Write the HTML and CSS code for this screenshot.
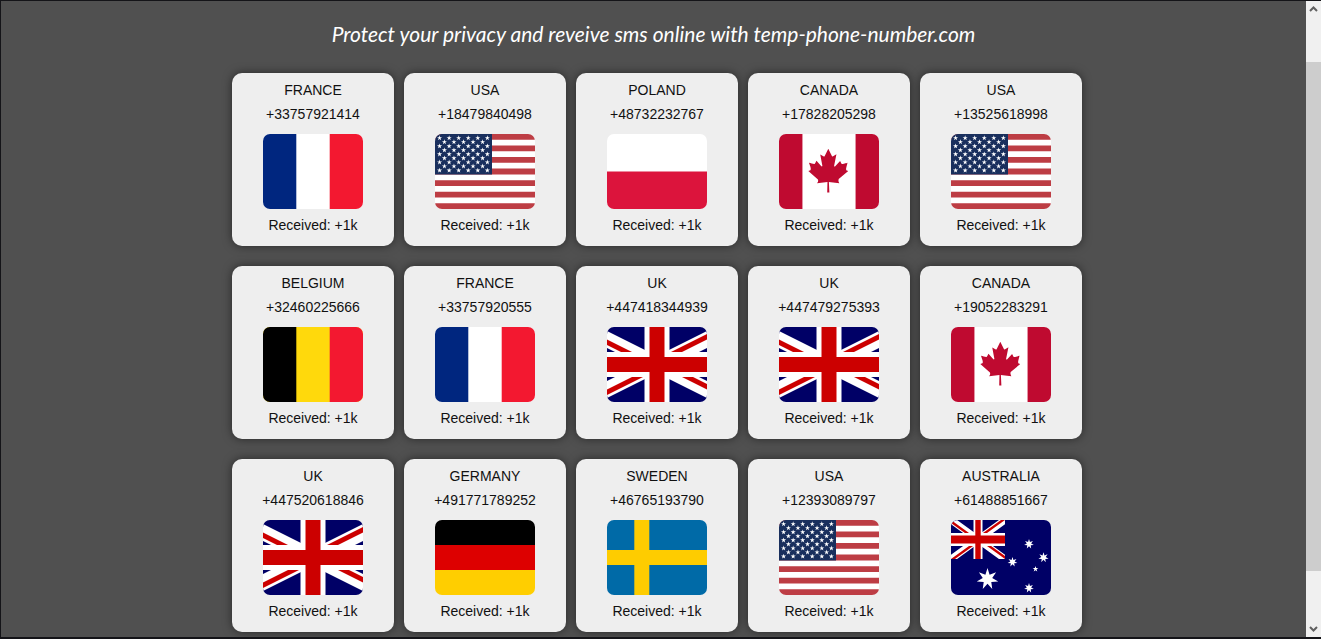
FILE: index.html
```html
<!DOCTYPE html>
<html lang="en">
<head>
<meta charset="utf-8">
<title>Temp phone number</title>
<link rel="stylesheet" href="styles.css">
</head>
<body>
<svg class="sprite" aria-hidden="true">
  <defs>
    <polygon id="star5" points="0,-10 2.2,-3.1 9.5,-3.1 3.6,1.2 5.9,8.1 0,3.8 -5.9,8.1 -3.6,1.2 -9.5,-3.1 -2.2,-3.1"/>
    <polygon id="star7" points="0,-10 1.91,-3.96 7.82,-6.23 4.29,-.98 9.75,2.23 3.44,2.74 4.34,9.01 0,4.4 -4.34,9.01 -3.44,2.74 -9.75,2.23 -4.29,-.98 -7.82,-6.23 -1.91,-3.96"/>
    <use id="us-star" href="#star5" transform="scale(.27)"/>
    <g id="us-row5"><use href="#us-star"/><use href="#us-star" x="9.55"/><use href="#us-star" x="19.1"/><use href="#us-star" x="28.65"/><use href="#us-star" x="38.2"/></g>
    <g id="us-row6"><use href="#us-row5"/><use href="#us-star" x="47.75"/></g>
    <clipPath id="jack-halves"><path d="M30 15h30v15zv15H0zH0V0zV0h30z"/></clipPath>
    <clipPath id="jack-frame"><path d="M0 0h60v30H0z"/></clipPath>
    <g id="jack" clip-path="url(#jack-frame)">
      <path fill="#006" d="M0 0h60v30H0z"/>
      <path stroke="#fff" stroke-width="6" d="M0 0l60 30M60 0L0 30"/>
      <path stroke="#c00" stroke-width="4" clip-path="url(#jack-halves)" d="M0 0l60 30M60 0L0 30"/>
      <path stroke="#fff" stroke-width="10" d="M30 0v30M0 15h60"/>
      <path stroke="#c00" stroke-width="6" d="M30 0v30M0 15h60"/>
    </g>
  </defs>
  <symbol id="fr" viewBox="0 0 100 75"><path fill="#fff" d="M0 0h100v75H0z"/><path fill="#00267f" d="M0 0h33.3v75H0z"/><path fill="#f31830" d="M66.7 0H100v75H66.7z"/></symbol>
  <symbol id="be" viewBox="0 0 100 75"><path fill="#ffd90c" d="M0 0h100v75H0z"/><path d="M0 0h33.3v75H0z"/><path fill="#f31830" d="M66.7 0H100v75H66.7z"/></symbol>
  <symbol id="pl" viewBox="0 0 100 75"><path fill="#fff" d="M0 0h100v75H0z"/><path fill="#dc143c" d="M0 37.5h100V75H0z"/></symbol>
  <symbol id="de" viewBox="0 0 100 75"><path d="M0 0h100v25H0z"/><path fill="#d00" d="M0 25h100v25H0z"/><path fill="#ffce00" d="M0 50h100v25H0z"/></symbol>
  <symbol id="se" viewBox="0 0 100 75"><path fill="#006aa7" d="M0 0h100v75H0z"/><path fill="#fecc00" d="M27.3 0h15v30H100v15H42.3v30h-15V45H0V30h27.3z"/></symbol>
  <symbol id="gb" viewBox="0 0 100 75"><use href="#jack" transform="translate(-25 0) scale(2.5)"/></symbol>
  <symbol id="ca" viewBox="0 0 640 480"><path fill="#fff" d="M0 0h640v480H0z"/><path fill="#bf0a30" d="M0 0h150v480H0zM490 0h150v480H490zM201 232l-13.3 4.4 61.4 54c4.7 13.7-1.6 17.8-5.6 25l66.6-8.4-1.6 67 13.9-.3-3.1-66.6 66.7 8c-4.1-8.7-7.8-13.3-4-27.2l61.3-51-10.7-4c-8.8-6.8 3.8-32.6 5.6-48.9 0 0-35.7 12.3-38 5.8l-9.2-17.5-32.6 35.8c-3.5.9-5-.5-5.9-3.5l15-74.8-23.8 13.4c-2 .9-4 .1-5.2-2.2l-23-46-23.6 47.8c-1.8 1.7-3.6 1.9-5 .7L264 130.8l13.7 74.1c-1.1 3-3.7 3.8-6.7 2.2l-31.2-35.3c-4 6.5-6.8 17.1-12.2 19.5-5.4 2.3-23.5-4.5-35.6-7 4.2 14.8 17 39.6 9 47.7z"/></symbol>
  <symbol id="us" viewBox="0 0 100 75">
    <path fill="#fff" d="M0 0h100v75H0z"/>
    <path stroke="#bd3d44" stroke-width="5.77" d="M0 2.88h100M0 14.42h100M0 25.96h100M0 37.5h100M0 49.04h100M0 60.58h100M0 72.12h100"/>
    <path fill="#192f5d" d="M0 0h57v40.4H0z"/>
    <g fill="#fff">
      <use href="#us-row6" x="4.6" y="4"/><use href="#us-row5" x="9.4" y="8"/><use href="#us-row6" x="4.6" y="12.1"/><use href="#us-row5" x="9.4" y="16.1"/><use href="#us-row6" x="4.6" y="20.2"/><use href="#us-row5" x="9.4" y="24.2"/><use href="#us-row6" x="4.6" y="28.3"/><use href="#us-row5" x="9.4" y="32.3"/><use href="#us-row6" x="4.6" y="36.4"/>
    </g>
  </symbol>
  <symbol id="au" viewBox="0 0 100 75">
    <path fill="#006" d="M0 0h100v75H0z"/>
    <use href="#jack" transform="scale(.9 1.3)"/>
    <g fill="#fff">
      <use href="#star7" transform="translate(36.5 59) scale(1.1)"/>
      <use href="#star7" transform="translate(78 24) scale(.5)"/>
      <use href="#star7" transform="translate(92.5 37.5) scale(.52)"/>
      <use href="#star7" transform="translate(61.5 42) scale(.5)"/>
      <use href="#star7" transform="translate(78 68) scale(.5)"/>
      <use href="#star5" transform="translate(84.5 49) scale(.3)"/>
    </g>
  </symbol>
</svg>
<div class="window">
  <main class="page">
    <h1 class="title">Protect your privacy and reveive sms online with temp-phone-number.com</h1>
    <div class="cards">
      <a class="card" href="#"><span>FRANCE</span><span>+33757921414</span><svg class="flag" aria-hidden="true"><use href="#fr"/></svg><span>Received: +1k</span></a>
      <a class="card" href="#"><span>USA</span><span>+18479840498</span><svg class="flag" aria-hidden="true"><use href="#us"/></svg><span>Received: +1k</span></a>
      <a class="card" href="#"><span>POLAND</span><span>+48732232767</span><svg class="flag" aria-hidden="true"><use href="#pl"/></svg><span>Received: +1k</span></a>
      <a class="card" href="#"><span>CANADA</span><span>+17828205298</span><svg class="flag" aria-hidden="true"><use href="#ca"/></svg><span>Received: +1k</span></a>
      <a class="card" href="#"><span>USA</span><span>+13525618998</span><svg class="flag" aria-hidden="true"><use href="#us"/></svg><span>Received: +1k</span></a>
      <a class="card" href="#"><span>BELGIUM</span><span>+32460225666</span><svg class="flag" aria-hidden="true"><use href="#be"/></svg><span>Received: +1k</span></a>
      <a class="card" href="#"><span>FRANCE</span><span>+33757920555</span><svg class="flag" aria-hidden="true"><use href="#fr"/></svg><span>Received: +1k</span></a>
      <a class="card" href="#"><span>UK</span><span>+447418344939</span><svg class="flag" aria-hidden="true"><use href="#gb"/></svg><span>Received: +1k</span></a>
      <a class="card" href="#"><span>UK</span><span>+447479275393</span><svg class="flag" aria-hidden="true"><use href="#gb"/></svg><span>Received: +1k</span></a>
      <a class="card" href="#"><span>CANADA</span><span>+19052283291</span><svg class="flag" aria-hidden="true"><use href="#ca"/></svg><span>Received: +1k</span></a>
      <a class="card" href="#"><span>UK</span><span>+447520618846</span><svg class="flag" aria-hidden="true"><use href="#gb"/></svg><span>Received: +1k</span></a>
      <a class="card" href="#"><span>GERMANY</span><span>+491771789252</span><svg class="flag" aria-hidden="true"><use href="#de"/></svg><span>Received: +1k</span></a>
      <a class="card" href="#"><span>SWEDEN</span><span>+46765193790</span><svg class="flag" aria-hidden="true"><use href="#se"/></svg><span>Received: +1k</span></a>
      <a class="card" href="#"><span>USA</span><span>+12393089797</span><svg class="flag" aria-hidden="true"><use href="#us"/></svg><span>Received: +1k</span></a>
      <a class="card" href="#"><span>AUSTRALIA</span><span>+61488851667</span><svg class="flag" aria-hidden="true"><use href="#au"/></svg><span>Received: +1k</span></a>
    </div>
  </main>
  <div class="scrollbar">
    <button class="arrow" type="button" aria-label="Scroll up"><svg width="9" height="8" viewBox="0 0 9 8"><path d="M1 6l3.5-3.5L8 6"/></svg></button>
    <div class="track"><div class="thumb"></div></div>
    <button class="arrow" type="button" aria-label="Scroll down"><svg width="9" height="8" viewBox="0 0 9 8"><path d="M1 2l3.5 3.5L8 2"/></svg></button>
  </div>
</div>
</body>
</html>
```
FILE: styles.css
```css
* {
  box-sizing: border-box;
}

body {
  margin: 0;
  background: #505050;
  font-family: "Liberation Sans", Arial, sans-serif;
  font-size: 14px;
  line-height: 24px;
  color: #111;
}

.sprite {
  position: absolute;
  width: 0;
  height: 0;
}

.window {
  display: flex;
  height: 100vh;
  overflow: hidden;
  border: solid #141418;
  border-width: 1px 0 2px 1px;
}

.page {
  flex: 1;
  min-width: 0;
  overflow: hidden;
}

.title {
  margin: 0;
  padding: 13px 0 19px;
  color: #fff;
  font-family: Lato, sans-serif;
  font-size: 21px;
  font-style: italic;
  font-weight: 400;
  line-height: 40px;
  text-align: center;
}

.cards {
  display: flex;
  flex-wrap: wrap;
  justify-content: center;
  gap: 20px 10px;
  max-width: 900px;
  margin: 0 auto;
  padding-left: 7px;
}

.card {
  display: flex;
  flex-direction: column;
  align-items: center;
  width: 162px;
  padding: 5px 0 9px;
  border-radius: 10px;
  background: #eee;
  box-shadow: 0 0 10px rgba(0, 0, 0, 0.5);
  color: inherit;
  text-decoration: none;
}

.flag {
  width: 100px;
  height: 75px;
  margin: 8px 0 4px;
  border-radius: 7px;
}

.scrollbar {
  display: flex;
  flex-direction: column;
  width: 15px;
  background: #f0f0f0;
}

.arrow {
  display: grid;
  place-items: center;
  height: 16px;
  padding: 0;
  border: 0;
  background: none;
}

.arrow path {
  fill: none;
  stroke: #606060;
  stroke-width: 2;
}

.track {
  display: grid;
  flex: 1;
  grid-template-rows: 45fr 509fr 50fr;
}

.thumb {
  grid-row: 2;
  background: #cdcdcd;
}
```
